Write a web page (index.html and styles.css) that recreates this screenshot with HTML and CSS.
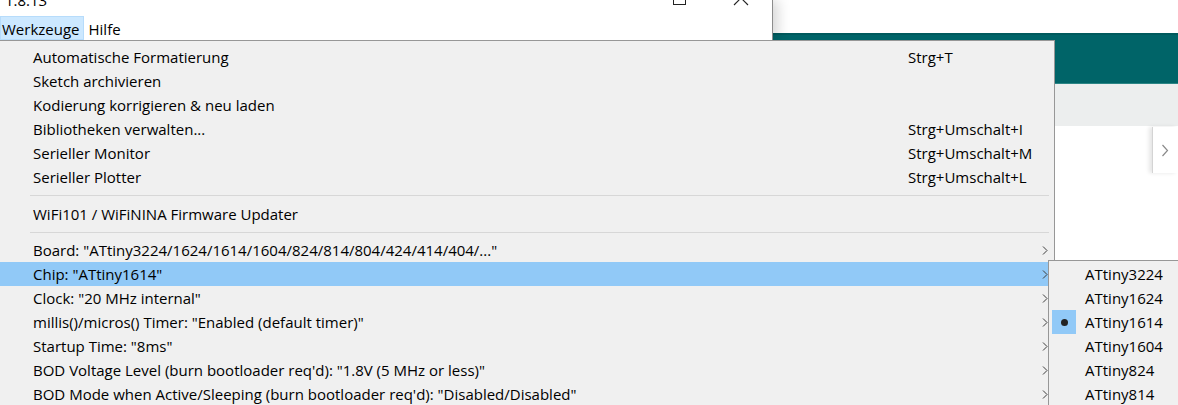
FILE: index.html
```html
<!DOCTYPE html>
<html lang="de">
<head>
<meta charset="utf-8">
<title>Werkzeuge</title>
<link rel="stylesheet" href="styles.css">
</head>
<body>
<div class="backwin">
  <div class="bw-top"></div>
  <div class="bw-teal"></div>
  <div class="bw-toolbar"></div>
  <div class="bw-body">
    <div class="sidetab">
      <svg width="8" height="13" viewBox="0 0 8 13"><polyline points="1.5,1 6.5,6.5 1.5,12" fill="none" stroke="#8a8a8a" stroke-width="1.2"/></svg>
    </div>
  </div>
</div>

<div class="frontwin">
  <div class="titlebar">
    <span class="title">1.8.13</span>
    <span class="ctrl ctrl-max"><svg width="14" height="16" viewBox="0 0 14 16"><rect x="0.5" y="-8" width="12" height="12.5" fill="none" stroke="#222" stroke-width="1"/></svg></span>
    <span class="ctrl ctrl-close"><svg width="18" height="16" viewBox="0 0 18 16"><line x1="2" y1="-9" x2="16" y2="5" stroke="#222" stroke-width="1.1"/><line x1="16" y1="-9" x2="2" y2="5" stroke="#222" stroke-width="1.1"/></svg></span>
  </div>
  <div class="menubar">
    <span class="mb-item active">Werkzeuge</span>
    <span class="mb-item">Hilfe</span>
  </div>
</div>

<div class="menu">
  <div class="item"><span class="label">Automatische Formatierung</span><span class="key">Strg+T</span><span class="arrow"></span></div>
  <div class="item"><span class="label">Sketch archivieren</span><span class="key"></span><span class="arrow"></span></div>
  <div class="item"><span class="label">Kodierung korrigieren &amp; neu laden</span><span class="key"></span><span class="arrow"></span></div>
  <div class="item"><span class="label">Bibliotheken verwalten...</span><span class="key">Strg+Umschalt+I</span><span class="arrow"></span></div>
  <div class="item"><span class="label">Serieller Monitor</span><span class="key">Strg+Umschalt+M</span><span class="arrow"></span></div>
  <div class="item"><span class="label">Serieller Plotter</span><span class="key">Strg+Umschalt+L</span><span class="arrow"></span></div>
  <div class="sep sep-first"></div>
  <div class="item"><span class="label">WiFi101 / WiFiNINA Firmware Updater</span><span class="key"></span><span class="arrow"></span></div>
  <div class="sep"></div>
  <div class="item"><span class="label">Board: "ATtiny3224/1624/1614/1604/824/814/804/424/414/404/..."</span><span class="key"></span><span class="arrow"><svg width="6" height="9" viewBox="0 0 6 9"><polyline points="1,0.5 5,4.5 1,8.5" fill="none" stroke="#3c3c3c" stroke-width="1"/></svg></span></div>
  <div class="item hl"><span class="label">Chip: "ATtiny1614"</span><span class="key"></span><span class="arrow"><svg width="6" height="9" viewBox="0 0 6 9"><polyline points="1,0.5 5,4.5 1,8.5" fill="none" stroke="#3c3c3c" stroke-width="1"/></svg></span></div>
  <div class="item"><span class="label">Clock: "20 MHz internal"</span><span class="key"></span><span class="arrow"><svg width="6" height="9" viewBox="0 0 6 9"><polyline points="1,0.5 5,4.5 1,8.5" fill="none" stroke="#3c3c3c" stroke-width="1"/></svg></span></div>
  <div class="item"><span class="label">millis()/micros() Timer: "Enabled (default timer)"</span><span class="key"></span><span class="arrow"><svg width="6" height="9" viewBox="0 0 6 9"><polyline points="1,0.5 5,4.5 1,8.5" fill="none" stroke="#3c3c3c" stroke-width="1"/></svg></span></div>
  <div class="item"><span class="label">Startup Time: "8ms"</span><span class="key"></span><span class="arrow"><svg width="6" height="9" viewBox="0 0 6 9"><polyline points="1,0.5 5,4.5 1,8.5" fill="none" stroke="#3c3c3c" stroke-width="1"/></svg></span></div>
  <div class="item"><span class="label">BOD Voltage Level (burn bootloader req'd): "1.8V (5 MHz or less)"</span><span class="key"></span><span class="arrow"><svg width="6" height="9" viewBox="0 0 6 9"><polyline points="1,0.5 5,4.5 1,8.5" fill="none" stroke="#3c3c3c" stroke-width="1"/></svg></span></div>
  <div class="item"><span class="label">BOD Mode when Active/Sleeping (burn bootloader req'd): "Disabled/Disabled"</span><span class="key"></span><span class="arrow"><svg width="6" height="9" viewBox="0 0 6 9"><polyline points="1,0.5 5,4.5 1,8.5" fill="none" stroke="#3c3c3c" stroke-width="1"/></svg></span></div>
</div>

<div class="submenu">
  <div class="sitem"><span class="check"></span><span>ATtiny3224</span></div>
  <div class="sitem"><span class="check"></span><span>ATtiny1624</span></div>
  <div class="sitem"><span class="check on"></span><span>ATtiny1614</span></div>
  <div class="sitem"><span class="check"></span><span>ATtiny1604</span></div>
  <div class="sitem"><span class="check"></span><span>ATtiny824</span></div>
  <div class="sitem"><span class="check"></span><span>ATtiny814</span></div>
</div>
</body>
</html>
```

FILE: styles.css
```css
* { box-sizing: border-box; }

body {
  margin: 0;
  width: 1178px;
  height: 405px;
  overflow: hidden;
  position: relative;
  background: #fff;
  font-family: "Open Sans", "Noto Sans", sans-serif;
  font-size: 15px;
  color: #000;
}

/* window in the background */
.backwin {
  display: flex;
  flex-direction: column;
  height: 405px;
}
.bw-top { height: 33px; background: #fff; }
.bw-teal {
  height: 51px;
  background: #006468;
  border-top: 2px solid #005a5d;
  border-bottom: 1px solid #2b8585;
}
.bw-toolbar { height: 42px; background: #eceeee; }
.bw-body {
  flex: 1;
  display: flex;
  justify-content: flex-end;
  align-items: flex-start;
}
.sidetab {
  width: 26px;
  height: 46px;
  margin-top: 1px;
  background: #fff;
  border-left: 1px solid #d4d4d4;
  box-shadow: -3px 0 4px rgba(0, 0, 0, 0.10);
  display: flex;
  align-items: center;
  justify-content: center;
  padding-right: 2px;
}

/* front window (title + menubar) */
.frontwin {
  position: absolute;
  left: 0;
  top: 0;
  width: 773px;
  height: 40px;
  background: #fff;
  border-right: 1px solid #8c8c8c;
  box-shadow: 5px 0 12px rgba(0, 0, 0, 0.16);
}
.titlebar {
  height: 16px;
  display: flex;
  align-items: flex-start;
  overflow: hidden;
}
.title {
  line-height: 20px;
  margin-top: -10px;
  padding-left: 5px;
  width: 673px;
}
.ctrl { display: block; height: 16px; }
.ctrl-max { width: 59px; }
.ctrl-close { width: 30px; }

.menubar {
  height: 24px;
  display: flex;
  gap: 3px;
}
.mb-item {
  line-height: 24px;
  padding: 1px 4px 0 2px;
}
.mb-item.active {
  background: #cce8ff;
  box-shadow: inset 0 0 0 1px #b7dcfb;
}

/* dropdown menu */
.menu {
  position: absolute;
  left: 0;
  top: 40px;
  width: 1055px;
  height: 380px;
  background: #f0f0f0;
  border: 1px solid #979797;
  border-left: none;
  padding: 4px 2px 0 0;
}
.item {
  display: flex;
  align-items: center;
  height: 24px;
  line-height: 24px;
  padding-left: 33px;
  white-space: nowrap;
}
.item.hl { background: #91c9f7; }
.label { flex: 1; }
.key { width: 130px; }
.arrow {
  width: 14px;
  display: flex;
  align-items: center;
  justify-content: center;
}
.sep {
  height: 12px;
  display: flex;
  align-items: center;
  padding-left: 30px;
  padding-right: 3px;
}
.sep.sep-first { height: 13px; }
.sep::before {
  content: "";
  flex: 1;
  height: 1px;
  background: #d7d7d7;
}

/* submenu */
.submenu {
  position: absolute;
  left: 1048px;
  top: 260px;
  width: 140px;
  height: 160px;
  background: #f0f0f0;
  border: 1px solid #979797;
  border-right: none;
  padding: 1px 0 0 3px;
}
.sitem {
  display: flex;
  align-items: center;
  height: 24px;
  line-height: 24px;
  white-space: nowrap;
}
.check {
  width: 24px;
  height: 24px;
  margin-right: 9px;
  display: flex;
  align-items: center;
  justify-content: center;
}
.check.on { background: #91c9f7; }
.check.on::before {
  content: "";
  width: 7px;
  height: 7px;
  border-radius: 50%;
  background: #222;
}
```
